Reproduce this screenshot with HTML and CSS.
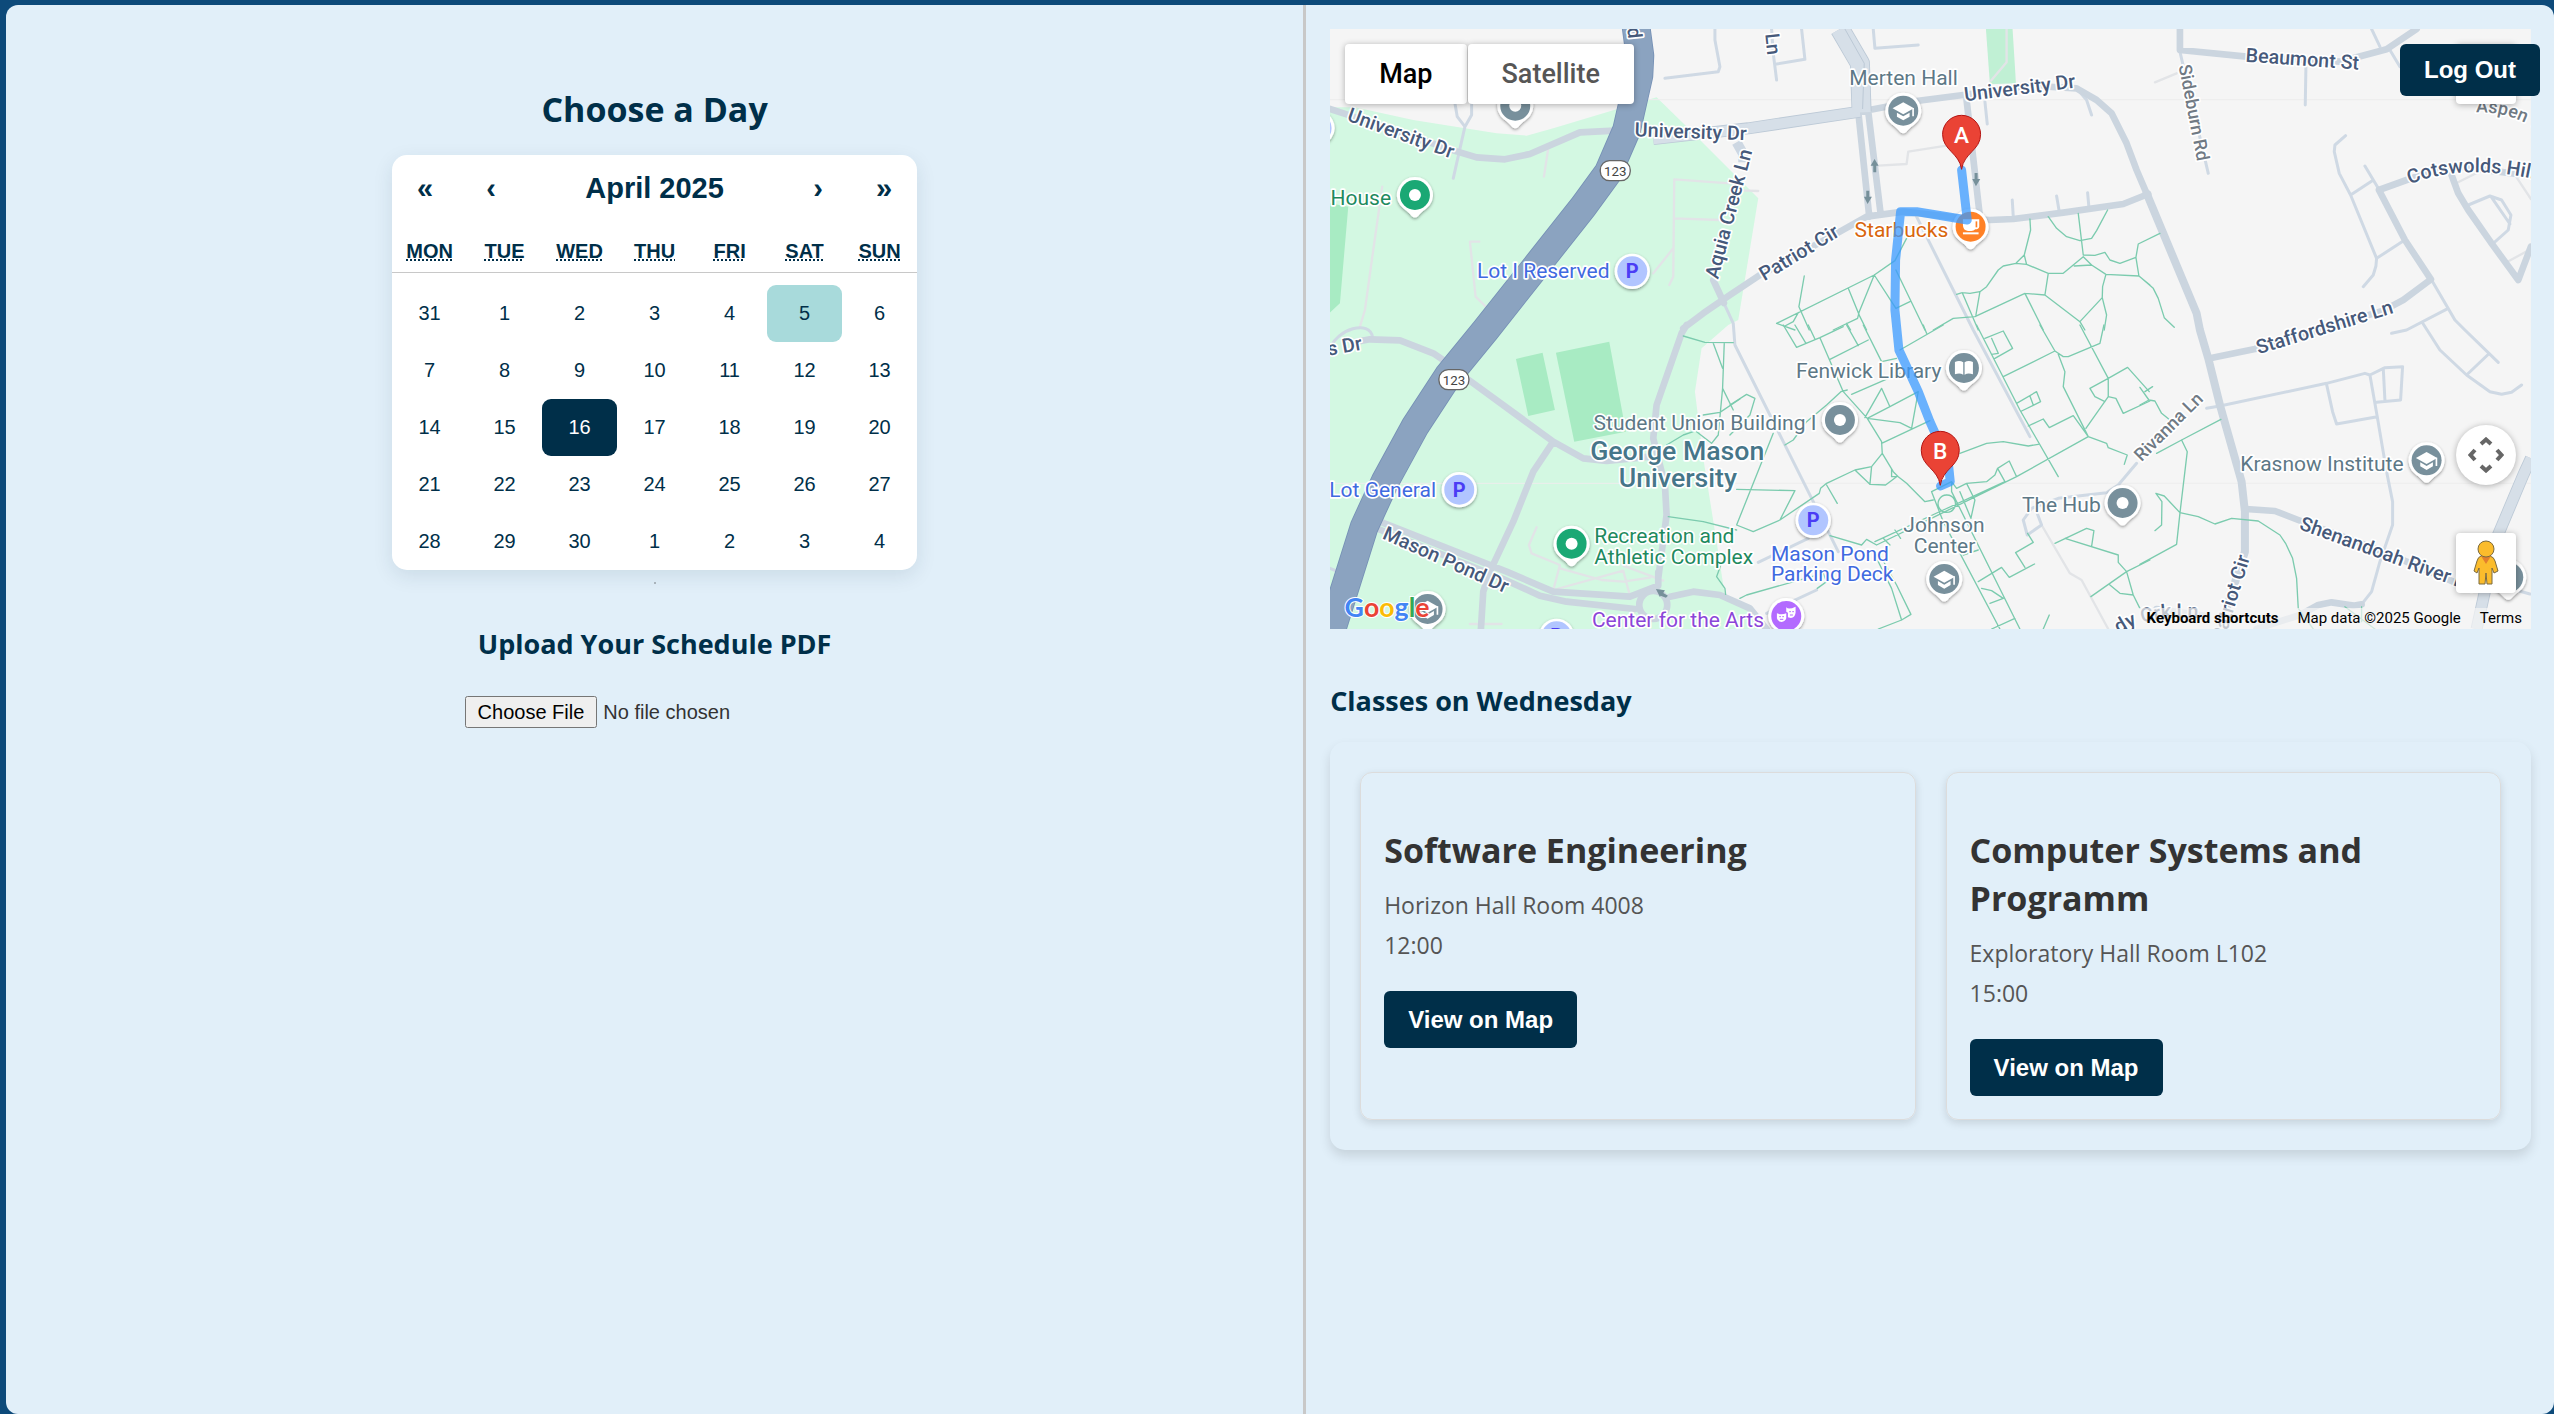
FILE: index.html
```html
<!DOCTYPE html>
<html lang="en">
<head>
<meta charset="utf-8">
<meta name="viewport" content="width=device-width, initial-scale=1">
<title>Class Schedule</title>
<link rel="stylesheet" href="styles.css">
</head>
<body>
<button class="btn logout" type="button">Log Out</button>
<div class="app">
  <main class="pane pane-left">
    <h1 class="heading">Choose a Day</h1>
    <section class="calendar" aria-label="Calendar">
      <div class="cal-nav">
        <button type="button" aria-label="Previous year">«</button>
        <button type="button" aria-label="Previous month">‹</button>
        <button type="button" class="cal-label">April 2025</button>
        <button type="button" aria-label="Next month">›</button>
        <button type="button" aria-label="Next year">»</button>
      </div>
      <table class="cal-table">
        <thead><tr><th><abbr title="Monday">Mon</abbr></th><th><abbr title="Tuesday">Tue</abbr></th><th><abbr title="Wednesday">Wed</abbr></th><th><abbr title="Thursday">Thu</abbr></th><th><abbr title="Friday">Fri</abbr></th><th><abbr title="Saturday">Sat</abbr></th><th><abbr title="Sunday">Sun</abbr></th></tr></thead>
        <tbody>
          <tr><td><button type="button">31</button></td><td><button type="button">1</button></td><td><button type="button">2</button></td><td><button type="button">3</button></td><td><button type="button">4</button></td><td><button type="button" class="today">5</button></td><td><button type="button">6</button></td></tr>
          <tr><td><button type="button">7</button></td><td><button type="button">8</button></td><td><button type="button">9</button></td><td><button type="button">10</button></td><td><button type="button">11</button></td><td><button type="button">12</button></td><td><button type="button">13</button></td></tr>
          <tr><td><button type="button">14</button></td><td><button type="button">15</button></td><td><button type="button" class="active">16</button></td><td><button type="button">17</button></td><td><button type="button">18</button></td><td><button type="button">19</button></td><td><button type="button">20</button></td></tr>
          <tr><td><button type="button">21</button></td><td><button type="button">22</button></td><td><button type="button">23</button></td><td><button type="button">24</button></td><td><button type="button">25</button></td><td><button type="button">26</button></td><td><button type="button">27</button></td></tr>
          <tr><td><button type="button">28</button></td><td><button type="button">29</button></td><td><button type="button">30</button></td><td><button type="button">1</button></td><td><button type="button">2</button></td><td><button type="button">3</button></td><td><button type="button">4</button></td></tr>
        </tbody>
      </table>
    </section>
    <hr class="rule">
    <label class="subheading" for="pdf">Upload Your Schedule PDF</label>
    <input class="file" id="pdf" type="file" accept="application/pdf">
  </main>

  <aside class="pane pane-right">
    <section class="map" aria-label="Campus map">
      <svg class="map-canvas" viewBox="0 0 3603 1800" preserveAspectRatio="xMidYMid slice">
        <defs>
          <filter id="soft" x="-30%" y="-30%" width="160%" height="160%"><feDropShadow dx="0" dy="4" stdDeviation="4" flood-color="#000" flood-opacity=".4"/></filter>
          <path id="drop" d="M0-54A54 54 0 0 1 44 31C30 46 20 50 10 63Q0 72-10 63C-20 50-30 46-44 31A54 54 0 0 1 0-54Z"/>
          <g id="pin"><use href="#drop" fill="#fff" filter="url(#soft)"/><circle r="45"/></g>
          <g id="spot"><use href="#pin"/><circle r="18" fill="#fff"/></g>
          <g id="school"><use href="#pin" fill="#78909c"/><path d="M-32-7 0-25 32-7 0 11Z" fill="#fff"/><path d="M-19 6V18L0 29 19 18V6L0 17ZM27-8H32V17H27Z" fill="#fff"/></g>
          <g id="parking"><circle r="53" fill="#fff" filter="url(#soft)"/><circle r="45" fill="#b1c5ff"/><text class="park-p" y="21">P</text></g>
          <path id="marker" d="M0 105C-7 55-57 48-57 0A57 57 0 0 1 57 0C57 48 7 55 0 105Z" fill="#ea4335" stroke="#b31412" stroke-width="3"/>
          <path id="hill" d="M3240 466Q3410 395 3660 462"/>
          <path id="aspen" d="M3438 250Q3530 246 3620 300"/>
          <path id="creek" d="M2368 1815Q2450 1755 2620 1768"/>
        </defs>
        <rect width="3603" height="1800" fill="#f5f5f5"/>
        <path d="M0 235H75L250 273 500 313 590 320 670 298 870 238 980 205 1060 283 1285 508 1225 873 1195 888 1115 958 1095 1088 1120 1288 1160 1538 1185 1700 1250 1740 1285 1800H0Z" fill="#d3f8e2"/>
        <path d="M0 523 55 533 30 823 0 851ZM558 990 638 971 675 1143 595 1161ZM678 971 838 938 888 1208 733 1238Z" fill="#a8ebc3"/>
        <path d="M1968 0H2048L2058 163 1980 166Z" fill="#c0f0d4"/>
        <path d="M0 212H3603M0 1363H3603" stroke="#ededed" stroke-width="3"/>
        <g class="lane faint">
          <path d="M157 473 130 663 105 843 90 893M448 638H420L437 803 470 835M655 358 642 443M1200 463 1033 451 1030 743 1018 768M1033 568 1170 573M1030 658 970 733M1285 486 1235 484M1645 410 1730 405 1735 368 1850 350M2030 0V100L1983 155M2475 160 2540 133M2135 1488 2220 1633 2255 1653 2335 1800M620 1495 597 1548 605 1573 690 1608 670 1683M690 1618 815 1653 880 1658 960 1646M670 1683 880 1625 900 1700M880 1610 1000 1655M420 1785H515M3530 700 3603 660M3380 462 3440 432M3560 445 3603 510"/>
        </g>
        <g class="lane">
          <path d="M375 223 382 263 405 293 425 258V223M405 293 370 448M1155 0V33L1170 113 1165 128 1005 148M1325 0 1330 73 1340 153M1415 0 1425 91 1340 105M1630 0 1635 58 1765 48M1965 218 1972 285M2240 178 2270 213 2285 258M2047 513 2050 563M2180 501 2188 548M2273 491 2277 535M1760 563 1930 903 2100 1223M1150 753 1180 818 1210 883 1215 948 1360 1238 1450 1418 1525 1568"/>
          <path d="M3125 0 3150 53M3180 63 3210 113M2550 68 2635 433M2928 113 2926 228M3047 320 3015 348 3013 368 3028 433 3062 498 3140 688 3138 711 3130 738 3100 773M3062 498 3127 455M3105 411 3145 478M3140 688 3220 636M3415 528 3480 501 3515 513 3543 558 3535 603 3490 643M3485 505 3540 585M3305 753 3375 873 3405 903 3505 1000M3355 838 3230 903 3185 913M3280 885 3330 963 3410 1038 3480 1088 3515 1096 3545 1090 3575 1068M3473 978 3410 1038"/>
          <path d="M2630 1138 2670 1131 2990 1063 3105 1033 3120 1038 3165 1016 3218 1013 3212 1113 3140 1120M3160 1018 3165 1113M3120 1038 3142 1163 3170 1328 3188 1418V1488L3150 1598 3125 1688 3095 1726M2990 1066 3008 1148 3020 1185 3142 1163M2420 1303 2365 1368 2330 1391 2185 1408 2105 1438 2080 1473 2092 1518 2135 1488 2120 1448M1460 1683 1310 1753M1285 1600 1435 1528M0 960C20 900 120 870 128 925M0 1618 20 1626M3440 1650 3600 1695"/>
        </g>
        <g class="road">
          <path d="M0 240 50 256 370 364 440 385 525 391 600 375 750 310 855 305M1590 248 1760 216 1900 198 2100 170 2240 178 2300 213 2345 253 2390 343 2420 423 2450 493M1060 898 1120 853 1200 798 1290 738 1530 608 1610 563 1720 548 1900 568 1980 573 2050 570 2200 551 2380 525 2455 495M1070 888 1055 913 980 1128 970 1228 1005 1368 1010 1458 985 1648M80 938 120 931 210 934 310 973 340 993M410 1048 670 1238 760 1288 830 1296 960 1283M670 1238 610 1328 550 1478 480 1628 460 1688 453 1800M150 1478 530 1628 670 1688 900 1703 985 1670 985 1630M145 1500 520 1650 630 1700 710 1718 915 1740M1020 1703 1090 1688 1170 1698 1260 1738 1310 1800M1585 248 1618 563M1615 248 1652 553M1910 213 1950 563M1150 753 1182 822M2550 0V63L2750 83 3030 98 3170 61 3260 0M3603 440 3360 410 3230 453 3147 483 3225 633 3303 751 3220 813 3160 845 2775 960 2640 988M3365 438 3385 493 3415 543 3485 643 3565 753 3603 653M2748 1440 2835 1446 2905 1473 3160 1568 3370 1658M3095 1726 3070 1730 3005 1720 2965 1728 2910 1758 2780 1800M2480 1740 2620 1760"/>
          <circle cx="970" cy="1728" r="42"/>
          <path class="wide" d="M2450 493 2600 853 2610 903 2635 988 2670 1128 2735 1358 2745 1448V1568L2670 1800"/>
        </g>
        <path d="M1220 340 1240 375 1240 400" stroke="#cdd7e2" stroke-width="30" fill="none"/>
        <g fill="none" stroke-linejoin="round">
          <path d="M970 330 1255 298 1590 248M3603 1288 3580 1338 3500 1528 3440 1800" stroke="#bcc9d6" stroke-width="36"/>
          <path d="M1530 0 1590 103 1595 248" stroke="#bcc9d6" stroke-width="60"/>
          <path d="M970 330 1255 298 1590 248M3603 1288 3580 1338 3500 1528 3440 1800" stroke="#d6dfe8" stroke-width="31"/>
          <path d="M1530 0 1590 103 1595 250" stroke="#d6dfe8" stroke-width="55"/>
          <path d="M1545 0 1603 103 1598 240" stroke="#bcc9d6" stroke-width="3"/>
          <path d="M918-10 930 80 927 140 890 303 835 430 760 533 467 903 355 1040 255 1193 165 1358 103 1493 0 1820" stroke="#7590b5" stroke-width="86"/>
          <path d="M918-10 930 80 927 140 890 303 835 430 760 533 467 903 355 1040 255 1193 165 1358 103 1493 0 1820" stroke="#8ba3c0" stroke-width="81"/>
        </g>
        <g class="trail">
          <g transform="translate(1200 -27)"><path d="M223 768 207 860 238 930M140 910 433 765 495 722 530 655M140 910 195 930M165 918 190 905 205 878M433 765 388 875 383 895 310 930M433 765 498 865 540 845M498 750 585 930M355 805 390 890 410 930M350 910 362 930M900 597 902 630 883 705 858 730 820 738 805 750 770 800 750 815 720 820 697 818 680 823M883 705 890 733 858 730M890 733 955 760H1000L1060 710 1085 735 1128 763 1227 768 1260 795M955 760 945 825 885 820 735 890 670 895 610 930M885 820 940 930M945 825 1050 905 1117 833 1118 800 1128 763M1050 905 1065 930M1117 833 1130 885 1123 930M697 818 745 930M750 815 738 885M955 590 980 625 1010 650 1050 662 1085 655 1100 632 1133 570M1045 580 1060 705 1095 706 1125 697 1140 720 1170 730 1218 712 1227 768M1218 712 1225 672 1290 640M1033 738 1085 735M1230 770 1270 805 1285 835 1303 893 1333 922"/></g>
          <g transform="translate(1200 888)"><path d="M160 0 200 67 270 38 340 5M270 38 340 200 410 278M195 0 228 55M235 0 255 42M350 0 385 62M400 0 455 110 500 100M300 103 415 45M333 200 352 195M365 208 510 145M405 278 455 190 480 245 412 280 455 350 457 385 490 440 505 455 530 475 585 530 610 525M412 280 510 293 545 310 565 200 480 245M455 355 600 287M457 385 425 425 375 435 290 475 272 490 268 505 150 585 70 620 20 600 130 325M425 425 420 478 467 480 500 455H485V432M375 435 420 478M290 480 322 535M150 585 195 497 20 493M0 240 50 208 75 220 60 270 0 330M165 360 190 345 230 290 290 240 333 200M510 75 640 0M580 0 590 25M690 385 770 355 820 350 895 363 925 358M740 0 870 255 985 455M930 0 975 78 1000 95H1015L1110 55 1122 0M1050 0 1135 160V215L1068 310M975 78 820 155M985 88 1005 140 1000 185 1075 335 860 455 635 565 440 660M435 650 640 555 825 470M765 40 820 18 848 70 795 100M785 40 805 85 785 88M860 235 920 200 932 230 875 258M900 213 910 240M895 303 940 282 958 308 1030 272 1075 335 1130 355 1135 368 1192 390 1183 418M1135 160 1080 190 1095 215 1125 230M1135 160 1193 127 1258 200M1135 215 1158 220 1180 265 1260 228M605 500 665 470 680 490 710 475 770 470 795 450 803 430 838 408 860 455M803 430 825 470M605 500 640 590 810 912M665 470V500L870 912M710 475 735 525 723 580 690 500M650 510A26 26 0 1 0 651 510M700 690 745 675M745 770 815 727 838 757 914 717M885 727 857 683 910 652 893 625M755 790 785 797 820 820 780 835M785 912 855 880M440 660 410 643 395 660 300 632M435 690 485 790 515 885 543 868 500 780 450 690M445 912 515 885M30 820 50 810 280 745 290 770 262 790M460 640 480 660M495 615 512 640M975 655 1070 610 1092 617 1085 665 1005 640 1165 690V712L1190 740 1210 810 1230 850M1083 815 1190 740 1260 705M1140 780 1170 805 1210 810M958 870 940 912"/></g>
          <g transform="translate(2430 888)"><path d="M0 187 27 225 45 228 65 265 90 285M0 240 27 225M15 200 38 185M50 385 125 345 243 283M125 345 142 380 120 565 110 658 0 718M45 617 65 600 66 530 48 505 73 513 120 563 175 575 225 597 275 580 355 588 420 630 437 655 458 700 470 760 475 850 520 912M615 845 705 912M665 845V890"/></g>
          <g transform="translate(-30 888)"><path d="M1090 33 1155 52 1240 53M1213 55 1208 190 1195 330 1175 355 1130 320M1180 55 1208 130M1208 190 1240 255M1150 270 1200 262 1260 222M1040 360 1090 330 1120 320M1045 575 1150 590 1250 615M1210 700 1190 755 1215 790 1217 808"/></g>
        </g>
        <g fill="#76909a"><path d="M1634 390 1646 410H1639V430H1630V410H1622ZM1613 525 1602 503H1609V485H1618V503H1626ZM1938 472 1927 450H1934V432H1943V450H1951ZM978 1680 1005 1684 1000 1692 1014 1700 1008 1706 992 1700 990 1704Z"/></g>

        <g class="label street">
          <text transform="translate(49 274) rotate(20)">University Dr</text>
          <text transform="translate(914 322) rotate(2)">University Dr</text>
          <text transform="translate(1905 217) rotate(-7)">University Dr</text>
          <text transform="translate(1303 757) rotate(-31)">Patriot Cir</text>
          <text transform="translate(1164 752) rotate(-75)">Aquia Creek Ln</text>
          <text transform="translate(2746 98) rotate(4)">Beaumont St</text>
          <text><textPath href="#hill">Cotswolds Hills</textPath></text>
          <text transform="translate(2786 976) rotate(-17)">Staffordshire Ln</text>
          <text transform="translate(2906 1500) rotate(20)">Shenandoah River Ln</text>
          <text transform="translate(2682 1840) rotate(-73)">Patriot Cir</text>
          <text transform="translate(155 1528) rotate(24)">Mason Pond Dr</text>
          <text transform="translate(-4 980) rotate(-10)">s Dr</text>
          <text transform="translate(1306 15) rotate(84)">Ln</text>
          <text transform="translate(892 -3) rotate(84)">d</text>
          <text><textPath href="#creek">dy Crk Ln</textPath></text>
        </g>
        <g class="label minor">
          <text transform="translate(2546 110) rotate(79)">Sideburn Rd</text>
          <text transform="translate(2435 1300) rotate(-45)">Rivanna Ln</text>
          <text><textPath href="#aspen">Aspen W</textPath></text>
        </g>
        <g class="label place">
          <text x="1558" y="167">Merten Hall</text>
          <text x="1398" y="1046">Fenwick Library</text>
          <text x="791" y="1203">Student Union Building I</text>
          <text x="2076" y="1450">The Hub</text>
          <text x="1842" y="1509" text-anchor="middle">Johnson</text>
          <text x="1844" y="1571" text-anchor="middle">Center</text>
          <text x="2731" y="1325">Krasnow Institute</text>
        </g>
        <g class="label green">
          <text x="2" y="528">House</text>
          <text x="793" y="1542">Recreation and</text>
          <text x="793" y="1605">Athletic Complex</text>
        </g>
        <g class="label blue">
          <text x="441" y="748">Lot I Reserved</text>
          <text x="-2" y="1403">Lot General</text>
          <text x="1323" y="1595">Mason Pond</text>
          <text x="1323" y="1657">Parking Deck</text>
        </g>
        <text class="label orange" x="1574" y="623">Starbucks</text>
        <text class="label purple" x="786" y="1793">Center for the Arts</text>
        <g class="label campus"><text x="1042" y="1293">George Mason</text><text x="1044" y="1374">University</text></g>
        <g class="shield"><rect x="811" y="395" width="90" height="60" rx="28"/><text x="856" y="440">123</text><rect x="327" y="1022" width="90" height="60" rx="28"/><text x="372" y="1067">123</text></g>

        <use href="#spot" x="255" y="498" fill="#1aa874"/>
        <use href="#spot" x="725" y="1544" fill="#1aa874"/>
        <use href="#spot" x="556" y="230" fill="#78909c"/>
        <use href="#spot" x="1530" y="1173" fill="#78909c"/>
        <use href="#spot" x="2378" y="1422" fill="#78909c"/>
        <use href="#spot" x="3535" y="1645" fill="#78909c"/>
        <use href="#school" x="1720" y="245"/>
        <use href="#school" x="1843" y="1650"/>
        <use href="#school" x="3290" y="1294"/>
        <use href="#school" x="293" y="1740"/>
        <use href="#parking" x="907" y="727"/>
        <use href="#parking" x="388" y="1382"/>
        <use href="#parking" x="1450" y="1474"/>
        <use href="#parking" x="680" y="1822"/>
        <use href="#drop" x="-40" y="297" fill="#fff" filter="url(#soft)"/>
        <circle cx="-40" cy="297" r="45" fill="#b1c5ff"/>
        <g transform="translate(1902 1017)"><use href="#pin" fill="#78909c"/><path d="M-27-18Q-13-24-2-17V20Q-13 13-27 19ZM27-18Q13-24 2-17V20Q13 13 27 19Z" fill="#fff"/></g>
        <g transform="translate(1922 593)"><use href="#pin" fill="#ff8126"/><path d="M-23-22H26V0Q24 8 14 8Q10 13 2 13H-8Q-23 11-23-5Z" fill="#fff"/><path d="M15-16H20V2H15Z" fill="#ff8126"/><path d="M-23 17H24V23H-23Z" fill="#fff"/></g>
        <g transform="translate(1369 1761)"><use href="#pin" fill="#b36bff"/><path d="M-28-8Q-14-2 0-8V7Q-3 17-14 18Q-26 17-28 7ZM0-26Q7-18 28-28V-10Q26 4 14 6L5 4V-10L0-13Z" fill="#fff"/><path d="M-21 2H-16M-12 2H-7M9-13H14M18-13H23M-19 10H-9M11-3H20" stroke="#b36bff" stroke-width="3"/></g>

        <path d="M1895 423 1912 573 1760 548H1712L1697 693 1695 843 1707 963 1765 1088 1800 1178 1855 1300 1861 1358 1832 1371" fill="none" stroke="#3a9aff" stroke-opacity=".75" stroke-width="27" stroke-linecap="round" stroke-linejoin="round"/>
        <use href="#marker" x="1895" y="316"/>
        <use href="#marker" x="1831" y="1264"/>
        <g class="marker-letter"><text x="1895" y="341">A</text><text x="1831" y="1289">B</text></g>
        <text class="logo" x="44" y="1763"><tspan fill="#4285f4">G</tspan><tspan fill="#ea4335">o</tspan><tspan fill="#fbbc04">o</tspan><tspan fill="#4285f4">g</tspan><tspan fill="#34a853">l</tspan><tspan fill="#ea4335">e</tspan></text>
      </svg>
      <div class="map-types">
        <button type="button" class="selected">Map</button>
        <button type="button">Satellite</button>
      </div>
      <button type="button" class="map-control fullscreen" aria-label="Toggle fullscreen view"></button>
      <div class="map-tools">
        <button type="button" class="map-control round" aria-label="Map camera controls">
          <svg width="36" height="36" viewBox="0 0 36 36" fill="none" stroke="#666" stroke-width="4"><path d="M13 7 18 2.500 23 7M13 29 18 33.500 23 29M7 13 2.500 18 7 23M29 13 33.500 18 29 23"/></svg>
        </button>
        <button type="button" class="map-control" aria-label="Street View">
          <svg width="26" height="46" viewBox="0 0 26 46"><path d="M8 16H17Q21 17 22 21L25 31 21 33 19 28V44H14L13 33 12 44H6V28L4 33 1 31 4 21Q5 17 8 16Z" fill="#fbbc2c" stroke="#7b6a3f"/><path d="M8 16H18L13 24Z" fill="#e37f2d"/><circle cx="13" cy="9" r="8" fill="#fbbc2c" stroke="#7b6a3f"/></svg>
        </button>
      </div>
      <div class="map-credits">
        <button type="button">Keyboard shortcuts</button>
        <span>Map data ©2025 Google</span>
        <a href="#terms">Terms</a>
      </div>
    </section>

    <h2 class="subheading">Classes on Wednesday</h2>
    <section class="classes">
      <article class="card">
        <h3>Software Engineering</h3>
        <p>Horizon Hall Room 4008</p>
        <p>12:00</p>
        <button class="btn" type="button">View on Map</button>
      </article>
      <article class="card">
        <h3>Computer Systems and Programm</h3>
        <p>Exploratory Hall Room L102</p>
        <p>15:00</p>
        <button class="btn" type="button">View on Map</button>
      </article>
    </section>
  </aside>
</div>
</body>
</html>
```

FILE: styles.css
```css
* { box-sizing: border-box; }

body {
  margin: 0;
  background: #0d4a7a;
  color: #333;
  font-family: "Open Sans", "Noto Sans", sans-serif;
}

button, input {
  font-family: "Liberation Sans", Arial, sans-serif;
}

button {
  margin: 0;
  padding: 0;
  border: 0;
  background: none;
  color: inherit;
  cursor: pointer;
}

.app {
  display: grid;
  grid-template-columns: 28fr 27fr;
  min-height: 100vh;
  padding: 5px 0 0 6px;
}

.pane { background: #e1eff9; }

.pane-left {
  display: flex;
  flex-direction: column;
  align-items: center;
  padding: 80px 24px 24px;
  border-radius: 12px 0 0 12px;
}

.pane-right {
  min-width: 0;
  padding: 24px 23px 24px 24px;
  border-left: 3px solid #c8c8c8;
  border-radius: 0 12px 12px 0;
}

.heading {
  margin: 0 0 22px;
  color: #002f49;
  font-size: 34px;
  line-height: 48px;
}

.subheading {
  margin: 0;
  color: #002f49;
  font-size: 27px;
  font-weight: 700;
  line-height: 36px;
}

.calendar {
  width: 525px;
  overflow: hidden;
  border-radius: 15px;
  background: #fff;
  box-shadow: 0 6px 20px rgba(0, 47, 73, .1);
  color: #002f49;
}

.cal-nav { display: flex; height: 66px; }

.cal-nav button {
  width: 66px;
  font-size: 29px;
  font-weight: 700;
}

.cal-nav .cal-label { flex: 1; }

.cal-table {
  width: 100%;
  border-spacing: 0;
  table-layout: fixed;
}

.cal-table th {
  height: 52px;
  padding: 18px 0 8px;
  border-bottom: 1px solid #c8c8c8;
  font: 700 20px "Liberation Sans", Arial, sans-serif;
  text-transform: uppercase;
}

.cal-table abbr { text-decoration: underline dotted; }

.cal-table tbody::before {
  display: block;
  height: 12px;
  content: "";
}

.cal-table td { padding: 0; }

.cal-table td button {
  display: block;
  width: 100%;
  height: 57px;
  border-radius: 9px;
  font-size: 20px;
}

.cal-table .today { background: #a8dadb; }
.cal-table .active { background: #002f49; color: #fff; }

.rule {
  width: 2px;
  height: 2px;
  margin: 12px 0 42px;
  border: 0;
  background: #a9b3bb;
}

.file {
  width: 380px;
  margin-top: 34px;
  font-size: 20px;
}

.file::file-selector-button {
  height: 32px;
  margin-right: 6px;
  padding: 0 11px;
  font: 20px "Liberation Sans", Arial, sans-serif;
}

.btn {
  padding: 15px 24px;
  border-radius: 6px;
  background: #002f49;
  color: #fff;
  font-size: 24px;
  font-weight: 700;
  line-height: 27px;
}

.logout {
  position: fixed;
  top: 44px;
  right: 14px;
  z-index: 10;
  padding: 12px 24px;
  line-height: 28px;
}

.map {
  position: relative;
  height: 600px;
  margin-bottom: 54px;
  overflow: hidden;
  font-family: Roboto, sans-serif;
}

.map-canvas { display: block; width: 100%; height: 100%; }

.lane, .road, .trail { fill: none; stroke-linecap: round; stroke-linejoin: round; }
.lane { stroke: #cfd9e4; stroke-width: 9; }
.faint { stroke: #e2e4e7; stroke-width: 7; }
.road { stroke: #cbd5df; stroke-width: 20; }
.road .wide { stroke-width: 24; }
.trail { stroke: #7bcbae; stroke-width: 4; }

.label {
  font-size: 63px;
  paint-order: stroke;
  stroke: #fff;
  stroke-width: 10px;
  stroke-linejoin: round;
}

.street { fill: #46597a; font-size: 59px; font-weight: 500; }
.minor { fill: #707a84; font-size: 54px; font-weight: 500; }
.place { fill: #5d7886; }
.green { fill: #1e8a5e; }
.blue { fill: #3f6ae0; }
.orange { fill: #d9660d; }
.purple { fill: #8b46d8; }
.campus { fill: #467689; font-size: 80px; font-weight: 500; text-anchor: middle; }

.park-p { fill: #4b3df5; font-size: 60px; font-weight: 700; text-anchor: middle; }
.shield rect { fill: #fff; stroke: #666; stroke-width: 4; }
.shield text { fill: #444; font-size: 40px; text-anchor: middle; }
.marker-letter { fill: #fff; font-size: 68px; font-weight: 500; text-anchor: middle; }

.logo {
  font-family: Lato, sans-serif;
  font-size: 80px;
  font-weight: 700;
  paint-order: stroke;
  stroke: #fff;
  stroke-width: 6px;
}

.map-types {
  position: absolute;
  top: 15px;
  left: 15px;
  display: flex;
  gap: 1px;
}

.map-types button, .map-control {
  height: 60px;
  border-radius: 4px;
  background: #fff;
  box-shadow: 0 1px 6px rgba(0, 0, 0, .3);
}

.map-types button {
  padding: 0 34px;
  color: #565656;
  font: 500 27px Roboto, sans-serif;
}

.map-types .selected { color: #000; }

.map-control {
  display: grid;
  place-items: center;
  width: 60px;
}

.fullscreen { position: absolute; top: 15px; right: 15px; }
.map-control.round { border-radius: 50%; }

.map-tools {
  position: absolute;
  right: 15px;
  bottom: 36px;
  display: grid;
  gap: 48px;
}

.map-credits {
  position: absolute;
  right: 0;
  bottom: 0;
  display: flex;
  gap: 19px;
  padding: 0 9px;
  background: rgba(245, 245, 245, .7);
  color: #000;
  font-size: 15px;
  line-height: 21px;
}

.map-credits button { font: 700 15px/21px Roboto, sans-serif; }
.map-credits a { color: inherit; text-decoration: none; }

.classes {
  display: grid;
  grid-template-columns: repeat(2, 1fr);
  gap: 30px;
  margin-top: 23px;
  padding: 30px;
  border-radius: 15px;
  box-shadow: 0 6px 12px rgba(0, 0, 0, .12);
}

.card {
  padding: 23px;
  border: 1px solid #dcdcdc;
  border-radius: 12px;
  box-shadow: 0 3px 8px rgba(0, 0, 0, .12);
}

.card h3 {
  margin: 30px 0 15px;
  font-size: 34px;
  line-height: 48px;
}

.card p {
  margin: 0 0 8px;
  color: #555;
  font-size: 23px;
  line-height: 32px;
}

.card .btn { margin-top: 22px; }
```
